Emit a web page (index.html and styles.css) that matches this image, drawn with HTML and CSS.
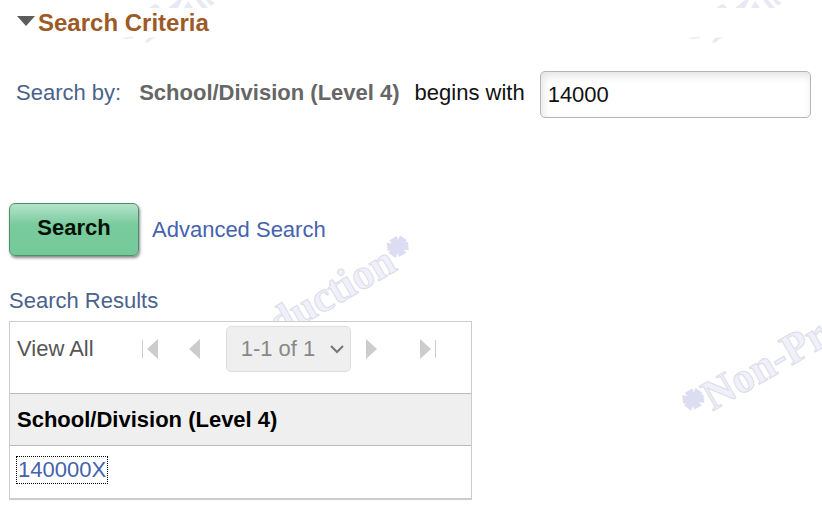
FILE: index.html
```html
<!DOCTYPE html>
<html lang="en">
<head>
<meta charset="utf-8">
<title>Search Criteria</title>
<link rel="stylesheet" href="styles.css">
</head>
<body>
<svg class="watermark" aria-hidden="true">
  <g class="scraps">
    <path d="M149 8l6-4 3 1 2 3zM168 8l5-4 5-4h4l-4 8zM184 8l4-7 5 7zM196 0h5l7 8h-6zM206 0h4l5 3-4 3zM120 38l12-1 2 1-8 1zM145 42l3-4 9-1-5 2-4 4z"/>
    <path d="M716 8l6-4 3 1 2 3zM735 8l5-4 5-4h4l-4 8zM751 8l4-7 5 7zM763 0h5l7 8h-6zM773 0h4l5 3-4 3zM687 38l12-1 2 1-8 1zM712 42l3-4 9-1-5 2-4 4z"/>
  </g>
  <text transform="translate(124 428) rotate(-30)"><tspan class="star">*</tspan>Non-Production<tspan class="star">*</tspan></text>
  <text transform="translate(694 422) rotate(-30)"><tspan class="star">*</tspan>Non-Production<tspan class="star">*</tspan></text>
</svg>
<main class="page">
  <h1 class="title">
    <svg class="caret" viewBox="0 0 18 10" aria-hidden="true"><path d="M0 0h18L9 10z"/></svg>Search Criteria
  </h1>
  <form class="search">
    <div class="criteria">
      <span class="by">Search by:</span>
      <strong class="field">School/Division (Level 4)</strong>
      <label class="operator" for="value">begins with</label>
      <input class="value" id="value" type="text" value="14000">
    </div>
    <div class="actions">
      <button class="submit" type="button">Search</button>
      <a class="link" href="#">Advanced Search</a>
    </div>
  </form>
  <h2 class="subtitle">Search Results</h2>
  <section class="results">
    <div class="pager">
      <span class="all">View All</span>
      <button class="step first" type="button" aria-label="First page" disabled><svg viewBox="0 0 16 20"><path d="M16 0v20L5 10z"/><path d="M0 1h1v18H0z"/></svg></button>
      <button class="step prev" type="button" aria-label="Previous page" disabled><svg viewBox="0 0 16 20"><path d="M13 0v20L2 10z"/></svg></button>
      <div class="range">
        <select aria-label="Rows shown" disabled><option>1-1 of 1</option></select>
        <svg class="chevron" viewBox="0 0 14 9" aria-hidden="true"><path d="M1 1l6 6 6-6"/></svg>
      </div>
      <button class="step next" type="button" aria-label="Next page" disabled><svg viewBox="0 0 16 20"><path d="M1 0v20l11-10z"/></svg></button>
      <button class="step last" type="button" aria-label="Last page" disabled><svg viewBox="0 0 16 20"><path d="M0 0v20l11-10z"/><path d="M15 1h1v18h-1z"/></svg></button>
    </div>
    <table class="table">
      <thead><tr><th scope="col">School/Division (Level 4)</th></tr></thead>
      <tbody><tr><td><a class="link focused" href="#">140000X</a></td></tr></tbody>
    </table>
  </section>
</main>
</body>
</html>
```
FILE: styles.css
```css
* {
  box-sizing: border-box;
}

body {
  margin: 0;
  background: #fff;
  color: #111;
  font: 22px/26px "Liberation Sans", Arial, sans-serif;
}

.watermark {
  position: absolute;
  top: 0;
  left: 0;
  z-index: -1;
  width: 100%;
  height: 100%;
  overflow: hidden;
  fill: #f0f0fa;
  stroke: #dcdce8;
  font: bold 43px "Liberation Serif", serif;
}

.star {
  fill: #dcdcf2;
  stroke: #dcdcf2;
  stroke-width: 3px;
}

.scraps {
  fill: #e9e9f6;
  stroke: none;
}

.page {
  padding: 8px 11px 8px 9px;
}

.title {
  display: flex;
  align-items: center;
  gap: 3px;
  margin: 0;
  padding-left: 8px;
  color: #9d5a26;
  font-size: 24px;
  line-height: 30px;
}

.caret {
  width: 18px;
  height: 10px;
  margin-bottom: 4px;
  fill: #5c5c5c;
}

.criteria {
  display: flex;
  align-items: center;
  margin-top: 33px;
  padding-left: 7px;
}

.criteria > * {
  padding-bottom: 4px;
}

.by {
  margin-right: 18px;
  color: #4a628c;
}

.field {
  margin-right: 15px;
  color: #666;
}

.operator {
  margin-right: 15px;
}

.criteria .value {
  flex: 1;
  min-width: 0;
  height: 47px;
  padding: 0 7px;
  border: 1px solid #b5b5b5;
  border-radius: 5px;
  background: #fff;
  box-shadow: inset 2px 4px 8px #e4e4e4;
  color: #111;
  font: inherit;
}

.actions {
  display: flex;
  align-items: center;
  gap: 13px;
  margin-top: 85px;
}

.submit {
  width: 130px;
  height: 53px;
  padding: 0 0 4px;
  border: 1px solid #4f8e6c;
  border-radius: 6px;
  background: linear-gradient(#b4e4ca, #7acb9e 40%, #74c999);
  box-shadow: 1px 2px 3px #888;
  color: #041208;
  font: bold 22px "Liberation Sans", Arial, sans-serif;
}

.link {
  color: #4562ae;
  text-decoration: none;
}

.subtitle {
  margin: 32px 0 7px;
  color: #4a628c;
  font-size: 22px;
  font-weight: normal;
}

.results {
  max-width: 463px;
  border: 1px solid #ccc;
  border-bottom-width: 2px;
  background: #fff;
}

.pager {
  display: flex;
  align-items: center;
  height: 71px;
  padding: 0 7px 17px;
}

.all {
  margin-right: 48px;
  color: #555;
}

.step {
  display: flex;
  width: 16px;
  height: 20px;
  padding: 0;
  border: 0;
  background: none;
}

.step svg {
  width: 16px;
  height: 20px;
  fill: #ccc;
}

.first {
  margin-right: 29px;
}

.prev {
  margin-right: 23px;
}

.next {
  margin: 0 39px 0 14px;
}

.range {
  position: relative;
}

.range select {
  display: block;
  width: 125px;
  height: 46px;
  padding: 0 14px;
  border: 1px solid #ddd;
  border-radius: 5px;
  appearance: none;
  background: #efefef;
  color: #888;
  opacity: 1;
  font: inherit;
}

.chevron {
  position: absolute;
  top: 19px;
  right: 7px;
  width: 14px;
  height: 9px;
  fill: none;
  stroke: #777;
  stroke-width: 2;
  pointer-events: none;
}

.table {
  width: 100%;
  border-collapse: collapse;
}

.table th {
  height: 52px;
  padding: 0 7px;
  border: solid #bbb;
  border-width: 1px 0;
  background: #efefef;
  color: #000;
  text-align: left;
}

.table td {
  height: 52px;
  padding: 0 7px 3px;
}

.focused {
  display: inline-block;
  padding: 0 1px;
  outline: 1px dotted #000;
}
```
